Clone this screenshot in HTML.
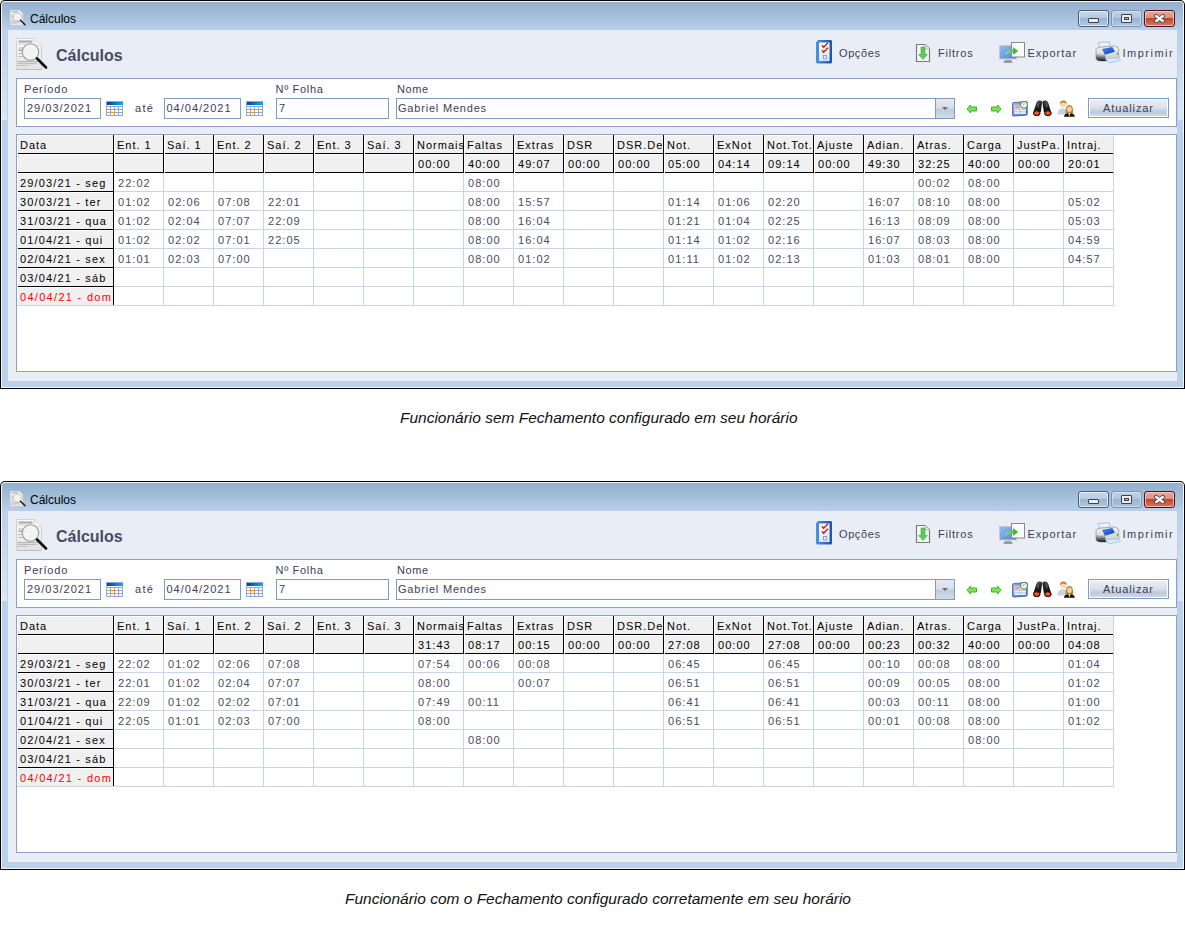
<!DOCTYPE html><html><head><meta charset="utf-8"><style>
html,body{margin:0;padding:0;background:#fff;}
body{width:1185px;height:929px;position:relative;overflow:hidden;font-family:"Liberation Sans",sans-serif;}
.win{position:absolute;left:0;width:1185px;height:389px;background:#000;border-radius:5px 5px 0 0;}
.win div,.win svg{position:absolute;}
.w-white{left:1px;top:1px;right:1px;bottom:1px;background:#f4f7fb;border-radius:4px 4px 0 0;}
.w-frame{left:2px;top:2px;right:2px;bottom:2px;background:#b9d1ea;border-radius:3px 3px 0 0;}
.w-title{left:2px;top:2px;right:2px;height:28px;background:linear-gradient(#93afcd,#b8d0e9);border-radius:3px 3px 0 0;}
.glow{top:30px;width:5px;height:90px;background:linear-gradient(#b9d1ea 0%,#c6d9ee 40%,#dae7f4 100%);}
.content{left:8px;top:30px;width:1169px;height:351px;background:#e9eef6;}
.t{position:absolute;font-size:11px;line-height:normal;white-space:nowrap;transform-origin:0 0;}
.tt{font-size:12px;color:#000;white-space:nowrap;line-height:normal;}
.big{left:56px;top:47px;font-size:16px;font-weight:bold;color:#4a4a66;white-space:nowrap;line-height:normal;}
.wb{top:10px;height:15px;border:1px solid #4d5d73;border-radius:3px;}
.wmin{left:1078px;width:29px;background:linear-gradient(#c6d8ec 0%,#b6cbe3 45%,#9ab5d3 50%,#b0c7e2 100%);box-shadow:inset 0 0 0 1px rgba(255,255,255,0.6);}
.wmax{left:1111px;width:29px;border-color:#7d92ae;background:linear-gradient(#bed2e8 0%,#b0c7e0 45%,#9ab5d3 50%,#aec5e0 100%);box-shadow:inset 0 0 0 1px rgba(255,255,255,0.4);}
.wclose{left:1144px;width:29px;border-color:#4a1020;background:linear-gradient(#eaa898 0%,#dc9080 45%,#c04428 50%,#d87a64 100%);box-shadow:inset 0 0 0 1px rgba(255,220,210,0.7);}
.gmin{left:9px;top:7px;width:9px;height:3px;background:#eee;border:1px solid #3a4050;border-radius:1px;}
.gmax{left:9px;top:3px;width:9px;height:7px;background:#eee;border:1px solid #3a4050;border-radius:1px;}
.gmax div{left:2px;top:2px;width:3px;height:1px;border:1px solid #3a4050;background:#9cc0e0;}
.panel{left:16px;top:78px;width:1159px;height:47px;background:#fff;border:1px solid #8ba1c1;}
.inp{top:98px;height:19px;background:#fff;border:1px solid #7f9dc0;}
.ddb{left:935px;top:98px;width:18px;height:19px;border:1px solid #7f9dc0;background:linear-gradient(#e4e9f2 0%,#d6dee9 48%,#bccbdc 52%,#d2dce8 100%);}
.ddarrow{left:6px;top:8px;width:0;height:0;border-left:3.5px solid transparent;border-right:3.5px solid transparent;border-top:3.5px solid #6a6a78;}
.btn{left:1088px;top:98px;width:79px;height:18px;border:1px solid #7f9dc0;background:#fff;}
.btnin{left:1px;top:1px;right:1px;bottom:1px;background:linear-gradient(#eaeef4 0%,#d8e0ea 50%,#b9c9dc 75%,#cfd9e6 100%);}
.grid{left:16px;top:134px;width:1159px;height:236px;background:#fff;border:1px solid #8da2c0;}
.gl{background:#c6d5e8;}
.hc{background:#f0f0f0;box-shadow:inset 1px 0 #fff,inset -1px 0 #000,inset 0 1px #fff,inset 0 -1px #000;}
.hc.lc{box-shadow:inset 1px 0 #fff,inset 0 1px #fff,inset 0 -1px #000;}
.hc.lr{box-shadow:inset 1px 0 #fff,inset -1px 0 #000,inset 0 1px #fff;}
.ct{font-size:11px;line-height:12px;white-space:nowrap;overflow:hidden;}
.ct{letter-spacing:1.05px;}
.hdr{letter-spacing:1.0px;}
.hdr.tot{letter-spacing:1.05px;}
.dt{letter-spacing:1.15px;}
.hdr{color:#000;}
.val{color:#4a4a60;}
.cap{position:absolute;font-size:15px;font-style:italic;color:#111;white-space:nowrap;line-height:normal;transform-origin:0 0;transform:scaleX(1.032);}
</style></head><body>
<div class="win" style="top:0px">
<div class="w-white"></div><div class="w-frame"></div><div class="w-title"></div>
<div class="content"></div><div class="glow" style="left:2px"></div><div class="glow" style="left:1178px"></div>
<svg width="16" height="16" viewBox="0 0 32 32" style="position:absolute;left:10px;top:10px"><defs><linearGradient id="dgt1" x1="0" y1="0" x2="0" y2="1"><stop offset="0" stop-color="#fbfbfb"/><stop offset="1" stop-color="#e2e2e2"/></linearGradient></defs>
<path d="M0.5 0.5 H18.5 L25.5 7.5 V31.5 H0.5 Z" fill="url(#dgt1)" stroke="#d2d2d2" stroke-width="1"/>
<path d="M0.5 31.5 H25.5" stroke="#bdbdbd" stroke-width="1"/>
<path d="M18.5 0.5 V7.5 H25.5" fill="#f4f4f4" stroke="#dadada"/>
<rect x="2.5" y="2.5" width="14" height="2" fill="#a8a8a8"/>
<rect x="1.5" y="5.5" width="14" height="0.8" fill="#c8c8c8"/>
<rect x="2.5" y="9.5" width="4" height="1" fill="#b8b8b8"/><rect x="2.5" y="11.5" width="5" height="1.5" fill="#a8a8a8"/><rect x="2.5" y="15" width="4" height="1" fill="#b8b8b8"/><rect x="2.5" y="18" width="5" height="1" fill="#b8b8b8"/>
<rect x="1.5" y="23" width="20" height="1.2" fill="#b4b4b4"/><rect x="1.5" y="25" width="19" height="1.2" fill="#bcbcbc"/><rect x="1.5" y="27" width="10" height="1" fill="#c4c4c4"/>
<circle cx="14.5" cy="14" r="8.2" fill="#f4f4f4" fill-opacity="0.92" stroke="#9c9c9c" stroke-width="1.1"/>
<path d="M21 20.5 L30 29.5" stroke="#141414" stroke-width="2.7" stroke-linecap="round"/></svg>
<div class="tt" style="left:30px;top:12px">Cálculos</div>
<div class="wb wmin"><div class="gmin"></div></div>
<div class="wb wmax"><div class="gmax"><div></div></div></div>
<div class="wb wclose"><svg width="12" height="10" viewBox="0 0 12 10" style="position:absolute;left:8.5px;top:3px"><path d="M2.2 2 L8.8 7 M8.8 2 L2.2 7" stroke="#3a4458" stroke-width="4" stroke-linecap="round"/><path d="M2.2 2 L8.8 7 M8.8 2 L2.2 7" stroke="#f8f8f8" stroke-width="2.4" stroke-linecap="round"/></svg></div>
<svg width="32" height="32" viewBox="0 0 32 32" style="position:absolute;left:16px;top:38px"><defs><linearGradient id="dgb1" x1="0" y1="0" x2="0" y2="1"><stop offset="0" stop-color="#fbfbfb"/><stop offset="1" stop-color="#e2e2e2"/></linearGradient></defs>
<path d="M0.5 0.5 H18.5 L25.5 7.5 V31.5 H0.5 Z" fill="url(#dgb1)" stroke="#d2d2d2" stroke-width="1"/>
<path d="M0.5 31.5 H25.5" stroke="#bdbdbd" stroke-width="1"/>
<path d="M18.5 0.5 V7.5 H25.5" fill="#f4f4f4" stroke="#dadada"/>
<rect x="2.5" y="2.5" width="14" height="2" fill="#a8a8a8"/>
<rect x="1.5" y="5.5" width="14" height="0.8" fill="#c8c8c8"/>
<rect x="2.5" y="9.5" width="4" height="1" fill="#b8b8b8"/><rect x="2.5" y="11.5" width="5" height="1.5" fill="#a8a8a8"/><rect x="2.5" y="15" width="4" height="1" fill="#b8b8b8"/><rect x="2.5" y="18" width="5" height="1" fill="#b8b8b8"/>
<rect x="1.5" y="23" width="20" height="1.2" fill="#b4b4b4"/><rect x="1.5" y="25" width="19" height="1.2" fill="#bcbcbc"/><rect x="1.5" y="27" width="10" height="1" fill="#c4c4c4"/>
<circle cx="14.5" cy="14" r="8.2" fill="#f4f4f4" fill-opacity="0.92" stroke="#9c9c9c" stroke-width="1.1"/>
<path d="M21 20.5 L30 29.5" stroke="#141414" stroke-width="2.7" stroke-linecap="round"/></svg>
<div class="big">Cálculos</div>
<svg width="18" height="25" viewBox="0 0 18 25" style="position:absolute;left:815px;top:39px"><defs><linearGradient id="ob1" x1="0" x2="1"><stop offset="0" stop-color="#4a92e4"/><stop offset="1" stop-color="#1a56b0"/></linearGradient>
<linearGradient id="op1" x1="0" y1="0" x2="0" y2="1"><stop offset="0" stop-color="#ffffff"/><stop offset="1" stop-color="#dde8f6"/></linearGradient></defs>
<path d="M2.2 2.2 Q2.2 1 3.6 1 H15.6 Q17 1 17 2.4 V23 Q17 24.5 15.6 24.5 H3.2 Q1 24.5 1 23 V3.2 Z" fill="url(#ob1)"/>
<rect x="4" y="3.5" width="10.5" height="18.5" fill="url(#op1)"/>
<path d="M7 6.2 L8.6 8.3 L13 3.8" stroke="#d82020" stroke-width="1.5" fill="none"/>
<path d="M7 11.2 L8.6 13.3 L13 8.8" stroke="#d82020" stroke-width="1.5" fill="none"/>
<rect x="8.5" y="16.5" width="3" height="3.5" fill="none" stroke="#6f90c8" stroke-width="0.8"/></svg>
<div class="t" style="left:839px;top:47px;color:#3d3d55;letter-spacing:0.6px">Opções</div>
<svg width="16" height="20" viewBox="0 0 16 20" style="position:absolute;left:915px;top:42.5px"><path d="M1.5 1.5 H10 L14.5 6 V18.5 H1.5 Z" fill="#f8f8f8" stroke="#7a7a7a" stroke-width="1.2"/>
<path d="M10 1.5 V6 H14.5" fill="#e6e6e6" stroke="#bbb" stroke-width="0.8"/>
<path d="M6 4 H10 V11.5 H12.3 L8 16.5 L3.7 11.5 H6 Z" fill="#5ccc5c" stroke="#3aa83a" stroke-width="0.6"/></svg>
<div class="t" style="left:938px;top:47px;color:#3d3d55;letter-spacing:0.8px">Filtros</div>
<svg width="28" height="23" viewBox="0 0 28 23" style="position:absolute;left:998px;top:41px"><defs><linearGradient id="scr1" x1="0" y1="0" x2="1" y2="1"><stop offset="0" stop-color="#8cc0f4"/><stop offset="1" stop-color="#4a86d8"/></linearGradient>
<linearGradient id="gar1" x1="0" x2="1"><stop offset="0" stop-color="#b8e080"/><stop offset="1" stop-color="#1aa82a"/></linearGradient></defs>
<rect x="1" y="4" width="18" height="14.5" fill="#c9c9c9"/>
<rect x="2" y="5" width="16" height="12.5" fill="url(#scr1)"/>
<path d="M5 22 L7 19 H13 L15 22 Z" fill="#9a9a9a"/>
<rect x="13" y="1" width="14" height="15.5" fill="#8a8a8a"/>
<rect x="14" y="2" width="12" height="13.5" fill="#fafafa"/>
<path d="M7 14 Q9 8.5 15 8.5 V6 L20 10 L15 14 V11.5 Q10 11 7 14 Z" fill="url(#gar1)"/></svg>
<div class="t" style="left:1027.5px;top:47px;color:#3d3d55;letter-spacing:1.0px">Exportar</div>
<svg width="26" height="24" viewBox="0 0 26 24" style="position:absolute;left:1095px;top:40px"><defs><linearGradient id="pb1" x1="0" y1="0" x2="0" y2="1"><stop offset="0" stop-color="#f4f4f4"/><stop offset="1" stop-color="#c8c8c8"/></linearGradient>
<linearGradient id="ps1" x1="0" y1="0" x2="0" y2="1"><stop offset="0" stop-color="#888" stop-opacity="0.1"/><stop offset="0.6" stop-color="#333" stop-opacity="0.7"/><stop offset="1" stop-color="#111" stop-opacity="0.95"/></linearGradient>
<linearGradient id="pl1" x1="0" y1="0" x2="1" y2="1"><stop offset="0" stop-color="#4a8af0"/><stop offset="1" stop-color="#0a3cc0"/></linearGradient></defs>
<path d="M3 2.5 L14.4 1.8 L15 6.7 L4.7 7.3 Z" fill="#e8f3ff" stroke="#8fb8e8" stroke-width="0.8"/>
<path d="M1 9.5 Q1.5 7.5 5 7.2 L19 6 Q23.7 6.5 23.7 9 V18 Q23.5 20.5 21 20.8 L7 21 Q1 21 1 18 Z" fill="url(#pb1)" stroke="#9a9a9a" stroke-width="0.8"/>
<path d="M1 13 Q4 14.5 10 14.5 L11 20.9 L6.5 21 Q1 21 1 17.5 Z" fill="url(#ps1)"/>
<path d="M7 9 L17.3 7 L19.9 11.8 L9.9 14.7 Z" fill="url(#pl1)"/>
<circle cx="22.4" cy="13.8" r="1" fill="#33cc33"/>
<path d="M10.5 18.6 L24 18 L25.4 20.5 L14.4 22.8 Z" fill="#dcecfc" stroke="#a0c0e0" stroke-width="0.8"/></svg>
<div class="t" style="left:1122.5px;top:47px;color:#3d3d55;letter-spacing:1.5px">Imprimir</div>
<div class="panel"></div>
<div class="t" style="left:24px;top:83px;color:#3d3d55;letter-spacing:0.8px">Período</div>
<div class="inp" style="left:24px;width:75px"></div>
<div class="t" style="left:27px;top:102px;color:#3d3d55;letter-spacing:1.0px">29/03/2021</div>
<svg width="17" height="15" viewBox="0 0 17 15" style="position:absolute;left:106px;top:101px"><defs><linearGradient id="cg1a" x1="0" x2="1"><stop offset="0" stop-color="#0a3a98"/><stop offset="1" stop-color="#00b4f0"/></linearGradient></defs><rect x="0" y="0" width="17" height="15" fill="#8fa9d6"/><rect x="1" y="1" width="16" height="3" fill="url(#cg1a)"/><rect x="1" y="4" width="15" height="1" fill="#fff"/><rect x="1" y="6" width="3" height="2" fill="#fff"/><rect x="1" y="9" width="3" height="2" fill="#fff"/><rect x="1" y="12" width="3" height="2" fill="#fff"/><rect x="5" y="6" width="3" height="2" fill="#fff"/><rect x="5" y="9" width="3" height="2" fill="#fff"/><rect x="5" y="12" width="3" height="2" fill="#fff"/><rect x="9" y="6" width="3" height="2" fill="#fff"/><rect x="9" y="9" width="3" height="2" fill="#fff"/><rect x="9" y="12" width="3" height="2" fill="#fff"/><rect x="13" y="6" width="3" height="2" fill="#fff"/><rect x="13" y="9" width="3" height="2" fill="#fff"/><rect x="13" y="12" width="3" height="2" fill="#fff"/><rect x="4.5" y="8.5" width="4" height="3" fill="none" stroke="#f7941d" stroke-width="1"/></svg>
<div class="t" style="left:135px;top:102px;color:#3d3d55;letter-spacing:1.3px">até</div>
<div class="inp" style="left:164px;width:75px"></div>
<div class="t" style="left:166.5px;top:102px;color:#3d3d55;letter-spacing:1.0px">04/04/2021</div>
<svg width="17" height="15" viewBox="0 0 17 15" style="position:absolute;left:246px;top:101px"><defs><linearGradient id="cg1b" x1="0" x2="1"><stop offset="0" stop-color="#0a3a98"/><stop offset="1" stop-color="#00b4f0"/></linearGradient></defs><rect x="0" y="0" width="17" height="15" fill="#8fa9d6"/><rect x="1" y="1" width="16" height="3" fill="url(#cg1b)"/><rect x="1" y="4" width="15" height="1" fill="#fff"/><rect x="1" y="6" width="3" height="2" fill="#fff"/><rect x="1" y="9" width="3" height="2" fill="#fff"/><rect x="1" y="12" width="3" height="2" fill="#fff"/><rect x="5" y="6" width="3" height="2" fill="#fff"/><rect x="5" y="9" width="3" height="2" fill="#fff"/><rect x="5" y="12" width="3" height="2" fill="#fff"/><rect x="9" y="6" width="3" height="2" fill="#fff"/><rect x="9" y="9" width="3" height="2" fill="#fff"/><rect x="9" y="12" width="3" height="2" fill="#fff"/><rect x="13" y="6" width="3" height="2" fill="#fff"/><rect x="13" y="9" width="3" height="2" fill="#fff"/><rect x="13" y="12" width="3" height="2" fill="#fff"/><rect x="4.5" y="8.5" width="4" height="3" fill="none" stroke="#f7941d" stroke-width="1"/></svg>
<div class="t" style="left:275.5px;top:83px;color:#3d3d55;letter-spacing:0.7px">Nº Folha</div>
<div class="inp" style="left:276px;width:111px"></div>
<div class="t" style="left:279px;top:102px;color:#3d3d55;">7</div>
<div class="t" style="left:397px;top:83px;color:#3d3d55;letter-spacing:0.6px">Nome</div>
<div class="inp" style="left:396px;width:557px"></div>
<div class="ddb"><div class="ddarrow"></div></div>
<div class="t" style="left:398px;top:102px;color:#3d3d55;letter-spacing:0.8px">Gabriel Mendes</div>
<svg width="12" height="10" viewBox="0 0 12 10" style="position:absolute;left:966px;top:104px"><path d="M1 5 L4.5 1 V3 H10.5 V7 H4.5 V9 Z" fill="#7fe060" stroke="#3cb814" stroke-width="1" stroke-linejoin="round"/></svg><svg width="12" height="10" viewBox="0 0 12 10" style="position:absolute;left:990px;top:104px"><path d="M11 5 L7.5 1 V3 H1.5 V7 H7.5 V9 Z" fill="#7fe060" stroke="#3cb814" stroke-width="1" stroke-linejoin="round"/></svg>
<svg width="17" height="16" viewBox="0 0 17 16" style="position:absolute;left:1012px;top:101px"><defs><linearGradient id="cc1" x1="0" y1="0" x2="1" y2="1"><stop offset="0" stop-color="#8fb0e6"/><stop offset="1" stop-color="#4a72bc"/></linearGradient></defs>
<path d="M1.5 1.5 Q0.5 1.5 0.5 2.8 V14 Q0.5 15.2 1.8 15.1 L14 14.2 Q15.3 14 15.3 12.8 V1.8 Q15.3 0.6 14 0.6 Z" fill="url(#cc1)" stroke="#3f62a8" stroke-width="0.8"/>
<rect x="2.3" y="3.8" width="11.5" height="9.2" fill="#f0f4fc"/>
<rect x="3" y="4.3" width="5" height="3.2" fill="#d9a58c"/>
<path d="M2.3 8.3 H13.8 M2.3 10.8 H13.8 M7.8 8 V13" stroke="#aac0e4" stroke-width="0.9"/>
<circle cx="12" cy="3.8" r="3.5" fill="#f2fcef" stroke="#4e7e4e" stroke-width="1"/>
<path d="M12.2 1.8 L11.6 4.4" stroke="#777" stroke-width="0.7" fill="none"/></svg>
<svg width="20" height="17" viewBox="0 0 20 17" style="position:absolute;left:1033px;top:100px"><defs><radialGradient id="ln1" cx="0.5" cy="0.4" r="0.6"><stop offset="0" stop-color="#ff7040"/><stop offset="1" stop-color="#c41a00"/></radialGradient>
<linearGradient id="bb1" x1="0" y1="0" x2="0" y2="1"><stop offset="0" stop-color="#3a3a3a"/><stop offset="0.5" stop-color="#202020"/><stop offset="1" stop-color="#111"/></linearGradient></defs>
<path d="M0.3 12.5 L3.4 2.8 Q4.6 0.5 6.3 0.6 Q8.6 0.7 9.3 1.8 L7.8 12 Z" fill="url(#bb1)"/>
<path d="M18.3 12.5 L15.2 2.8 Q14 0.5 12.3 0.6 Q10 0.7 9.3 1.8 L10.8 12 Z" fill="url(#bb1)"/>
<path d="M3.4 6 L4.6 2.2 Q5.5 1.2 6.4 1.5 L5.6 8 Z" fill="#8a8a8a" opacity="0.45"/>
<path d="M12.2 1.5 Q13.1 1.2 14 2.2 L15.2 6 L13 8 Z" fill="#8a8a8a" opacity="0.45"/>
<ellipse cx="3.7" cy="13.2" rx="3.4" ry="2.5" fill="url(#ln1)" stroke="#151515" stroke-width="1"/>
<ellipse cx="14.9" cy="13.2" rx="3.4" ry="2.5" fill="url(#ln1)" stroke="#151515" stroke-width="1"/></svg>
<svg width="19" height="18" viewBox="0 0 19 18" style="position:absolute;left:1057px;top:100px"><path d="M0.2 14.5 Q0.5 8.6 5.8 8.2 Q8.8 8.3 9 10 V14.5 Z" fill="#cbcfe6"/>
<circle cx="6.3" cy="4.2" r="3.2" fill="#f8d8b0"/>
<path d="M3 4.2 Q3 0.4 6.5 0.5 Q9.8 0.7 9.6 4 Q8.4 2.3 6 2.4 Q4.2 2.6 3 4.2 Z" fill="#b8862a"/>
<path d="M8.7 13.2 Q8.2 5 12.4 5 Q16.6 5 16.2 13.2 Z" fill="#b8862a"/>
<ellipse cx="12.4" cy="9.2" rx="2.3" ry="2.7" fill="#f6d0a8"/>
<path d="M6.9 16.8 Q7.2 13.3 12.4 13 Q17.5 13.3 17.9 16.8 Z" fill="#111"/>
<path d="M11.2 13 L12.4 16.8 L13.6 13 Z" fill="#f6d0a8"/></svg>
<div class="btn"><div class="btnin"></div></div>
<div class="t" style="left:1103px;top:102px;color:#3d3d55;letter-spacing:0.9px">Atualizar</div>
<div class="grid"></div>
<div class="gl" style="left:114px;top:191px;width:999px;height:1px"></div>
<div class="gl" style="left:114px;top:210px;width:999px;height:1px"></div>
<div class="gl" style="left:114px;top:229px;width:999px;height:1px"></div>
<div class="gl" style="left:114px;top:248px;width:999px;height:1px"></div>
<div class="gl" style="left:114px;top:267px;width:999px;height:1px"></div>
<div class="gl" style="left:114px;top:286px;width:999px;height:1px"></div>
<div class="gl" style="left:114px;top:305px;width:999px;height:1px"></div>
<div class="gl" style="left:17px;top:305px;width:1096px;height:1px"></div>
<div class="gl" style="left:163px;top:135px;width:1px;height:171px"></div>
<div class="gl" style="left:213px;top:135px;width:1px;height:171px"></div>
<div class="gl" style="left:263px;top:135px;width:1px;height:171px"></div>
<div class="gl" style="left:313px;top:135px;width:1px;height:171px"></div>
<div class="gl" style="left:363px;top:135px;width:1px;height:171px"></div>
<div class="gl" style="left:413px;top:135px;width:1px;height:171px"></div>
<div class="gl" style="left:463px;top:135px;width:1px;height:171px"></div>
<div class="gl" style="left:513px;top:135px;width:1px;height:171px"></div>
<div class="gl" style="left:563px;top:135px;width:1px;height:171px"></div>
<div class="gl" style="left:613px;top:135px;width:1px;height:171px"></div>
<div class="gl" style="left:663px;top:135px;width:1px;height:171px"></div>
<div class="gl" style="left:713px;top:135px;width:1px;height:171px"></div>
<div class="gl" style="left:763px;top:135px;width:1px;height:171px"></div>
<div class="gl" style="left:813px;top:135px;width:1px;height:171px"></div>
<div class="gl" style="left:863px;top:135px;width:1px;height:171px"></div>
<div class="gl" style="left:913px;top:135px;width:1px;height:171px"></div>
<div class="gl" style="left:963px;top:135px;width:1px;height:171px"></div>
<div class="gl" style="left:1013px;top:135px;width:1px;height:171px"></div>
<div class="gl" style="left:1063px;top:135px;width:1px;height:171px"></div>
<div class="gl" style="left:1113px;top:135px;width:1px;height:171px"></div>
<div class="hc" style="left:17px;top:135px;width:97px;height:19px"></div>
<div class="hc" style="left:114px;top:135px;width:50px;height:19px"></div>
<div class="hc" style="left:164px;top:135px;width:50px;height:19px"></div>
<div class="hc" style="left:214px;top:135px;width:50px;height:19px"></div>
<div class="hc" style="left:264px;top:135px;width:50px;height:19px"></div>
<div class="hc" style="left:314px;top:135px;width:50px;height:19px"></div>
<div class="hc" style="left:364px;top:135px;width:50px;height:19px"></div>
<div class="hc" style="left:414px;top:135px;width:50px;height:19px"></div>
<div class="hc" style="left:464px;top:135px;width:50px;height:19px"></div>
<div class="hc" style="left:514px;top:135px;width:50px;height:19px"></div>
<div class="hc" style="left:564px;top:135px;width:50px;height:19px"></div>
<div class="hc" style="left:614px;top:135px;width:50px;height:19px"></div>
<div class="hc" style="left:664px;top:135px;width:50px;height:19px"></div>
<div class="hc" style="left:714px;top:135px;width:50px;height:19px"></div>
<div class="hc" style="left:764px;top:135px;width:50px;height:19px"></div>
<div class="hc" style="left:814px;top:135px;width:50px;height:19px"></div>
<div class="hc" style="left:864px;top:135px;width:50px;height:19px"></div>
<div class="hc" style="left:914px;top:135px;width:50px;height:19px"></div>
<div class="hc" style="left:964px;top:135px;width:50px;height:19px"></div>
<div class="hc" style="left:1014px;top:135px;width:50px;height:19px"></div>
<div class="hc lc" style="left:1064px;top:135px;width:49px;height:19px"></div>
<div class="hc" style="left:17px;top:154px;width:97px;height:19px"></div>
<div class="hc" style="left:114px;top:154px;width:50px;height:19px"></div>
<div class="hc" style="left:164px;top:154px;width:50px;height:19px"></div>
<div class="hc" style="left:214px;top:154px;width:50px;height:19px"></div>
<div class="hc" style="left:264px;top:154px;width:50px;height:19px"></div>
<div class="hc" style="left:314px;top:154px;width:50px;height:19px"></div>
<div class="hc" style="left:364px;top:154px;width:50px;height:19px"></div>
<div class="hc" style="left:414px;top:154px;width:50px;height:19px"></div>
<div class="hc" style="left:464px;top:154px;width:50px;height:19px"></div>
<div class="hc" style="left:514px;top:154px;width:50px;height:19px"></div>
<div class="hc" style="left:564px;top:154px;width:50px;height:19px"></div>
<div class="hc" style="left:614px;top:154px;width:50px;height:19px"></div>
<div class="hc" style="left:664px;top:154px;width:50px;height:19px"></div>
<div class="hc" style="left:714px;top:154px;width:50px;height:19px"></div>
<div class="hc" style="left:764px;top:154px;width:50px;height:19px"></div>
<div class="hc" style="left:814px;top:154px;width:50px;height:19px"></div>
<div class="hc" style="left:864px;top:154px;width:50px;height:19px"></div>
<div class="hc" style="left:914px;top:154px;width:50px;height:19px"></div>
<div class="hc" style="left:964px;top:154px;width:50px;height:19px"></div>
<div class="hc" style="left:1014px;top:154px;width:50px;height:19px"></div>
<div class="hc lc" style="left:1064px;top:154px;width:49px;height:19px"></div>
<div class="hc" style="left:17px;top:173px;width:97px;height:19px"></div>
<div class="hc" style="left:17px;top:192px;width:97px;height:19px"></div>
<div class="hc" style="left:17px;top:211px;width:97px;height:19px"></div>
<div class="hc" style="left:17px;top:230px;width:97px;height:19px"></div>
<div class="hc" style="left:17px;top:249px;width:97px;height:19px"></div>
<div class="hc" style="left:17px;top:268px;width:97px;height:19px"></div>
<div class="hc lr" style="left:17px;top:287px;width:97px;height:18px"></div>
<div class="ct hdr" style="left:20px;top:139px;width:93px"><span>Data</span></div>
<div class="ct hdr" style="left:117px;top:139px;width:46px"><span>Ent. 1</span></div>
<div class="ct hdr" style="left:167px;top:139px;width:46px"><span>Saí. 1</span></div>
<div class="ct hdr" style="left:217px;top:139px;width:46px"><span>Ent. 2</span></div>
<div class="ct hdr" style="left:267px;top:139px;width:46px"><span>Saí. 2</span></div>
<div class="ct hdr" style="left:317px;top:139px;width:46px"><span>Ent. 3</span></div>
<div class="ct hdr" style="left:367px;top:139px;width:46px"><span>Saí. 3</span></div>
<div class="ct hdr" style="left:417px;top:139px;width:46px"><span>Normais</span></div>
<div class="ct hdr" style="left:467px;top:139px;width:46px"><span>Faltas</span></div>
<div class="ct hdr" style="left:517px;top:139px;width:46px"><span>Extras</span></div>
<div class="ct hdr" style="left:567px;top:139px;width:46px"><span>DSR</span></div>
<div class="ct hdr" style="left:617px;top:139px;width:46px"><span>DSR.De</span></div>
<div class="ct hdr" style="left:667px;top:139px;width:46px"><span>Not.</span></div>
<div class="ct hdr" style="left:717px;top:139px;width:46px"><span>ExNot</span></div>
<div class="ct hdr" style="left:767px;top:139px;width:46px"><span>Not.Tot.</span></div>
<div class="ct hdr" style="left:817px;top:139px;width:46px"><span>Ajuste</span></div>
<div class="ct hdr" style="left:867px;top:139px;width:46px"><span>Adian.</span></div>
<div class="ct hdr" style="left:917px;top:139px;width:46px"><span>Atras.</span></div>
<div class="ct hdr" style="left:967px;top:139px;width:46px"><span>Carga</span></div>
<div class="ct hdr" style="left:1017px;top:139px;width:46px"><span>JustPa.</span></div>
<div class="ct hdr" style="left:1067px;top:139px;width:46px"><span>Intraj.</span></div>
<div class="ct hdr tot" style="left:418px;top:158px;width:46px"><span>00:00</span></div>
<div class="ct hdr tot" style="left:468px;top:158px;width:46px"><span>40:00</span></div>
<div class="ct hdr tot" style="left:518px;top:158px;width:46px"><span>49:07</span></div>
<div class="ct hdr tot" style="left:568px;top:158px;width:46px"><span>00:00</span></div>
<div class="ct hdr tot" style="left:618px;top:158px;width:46px"><span>00:00</span></div>
<div class="ct hdr tot" style="left:668px;top:158px;width:46px"><span>05:00</span></div>
<div class="ct hdr tot" style="left:718px;top:158px;width:46px"><span>04:14</span></div>
<div class="ct hdr tot" style="left:768px;top:158px;width:46px"><span>09:14</span></div>
<div class="ct hdr tot" style="left:818px;top:158px;width:46px"><span>00:00</span></div>
<div class="ct hdr tot" style="left:868px;top:158px;width:46px"><span>49:30</span></div>
<div class="ct hdr tot" style="left:918px;top:158px;width:46px"><span>32:25</span></div>
<div class="ct hdr tot" style="left:968px;top:158px;width:46px"><span>40:00</span></div>
<div class="ct hdr tot" style="left:1018px;top:158px;width:46px"><span>00:00</span></div>
<div class="ct hdr tot" style="left:1068px;top:158px;width:46px"><span>20:01</span></div>
<div class="ct dt" style="left:20px;top:177px;width:93px;color:#000;"><span>29/03/21 - seg</span></div>
<div class="ct val" style="left:118px;top:177px;width:45px"><span>22:02</span></div>
<div class="ct val" style="left:468px;top:177px;width:45px"><span>08:00</span></div>
<div class="ct val" style="left:918px;top:177px;width:45px"><span>00:02</span></div>
<div class="ct val" style="left:968px;top:177px;width:45px"><span>08:00</span></div>
<div class="ct dt" style="left:20px;top:196px;width:93px;color:#000;"><span>30/03/21 - ter</span></div>
<div class="ct val" style="left:118px;top:196px;width:45px"><span>01:02</span></div>
<div class="ct val" style="left:168px;top:196px;width:45px"><span>02:06</span></div>
<div class="ct val" style="left:218px;top:196px;width:45px"><span>07:08</span></div>
<div class="ct val" style="left:268px;top:196px;width:45px"><span>22:01</span></div>
<div class="ct val" style="left:468px;top:196px;width:45px"><span>08:00</span></div>
<div class="ct val" style="left:518px;top:196px;width:45px"><span>15:57</span></div>
<div class="ct val" style="left:668px;top:196px;width:45px"><span>01:14</span></div>
<div class="ct val" style="left:718px;top:196px;width:45px"><span>01:06</span></div>
<div class="ct val" style="left:768px;top:196px;width:45px"><span>02:20</span></div>
<div class="ct val" style="left:868px;top:196px;width:45px"><span>16:07</span></div>
<div class="ct val" style="left:918px;top:196px;width:45px"><span>08:10</span></div>
<div class="ct val" style="left:968px;top:196px;width:45px"><span>08:00</span></div>
<div class="ct val" style="left:1068px;top:196px;width:45px"><span>05:02</span></div>
<div class="ct dt" style="left:20px;top:215px;width:93px;color:#000;"><span>31/03/21 - qua</span></div>
<div class="ct val" style="left:118px;top:215px;width:45px"><span>01:02</span></div>
<div class="ct val" style="left:168px;top:215px;width:45px"><span>02:04</span></div>
<div class="ct val" style="left:218px;top:215px;width:45px"><span>07:07</span></div>
<div class="ct val" style="left:268px;top:215px;width:45px"><span>22:09</span></div>
<div class="ct val" style="left:468px;top:215px;width:45px"><span>08:00</span></div>
<div class="ct val" style="left:518px;top:215px;width:45px"><span>16:04</span></div>
<div class="ct val" style="left:668px;top:215px;width:45px"><span>01:21</span></div>
<div class="ct val" style="left:718px;top:215px;width:45px"><span>01:04</span></div>
<div class="ct val" style="left:768px;top:215px;width:45px"><span>02:25</span></div>
<div class="ct val" style="left:868px;top:215px;width:45px"><span>16:13</span></div>
<div class="ct val" style="left:918px;top:215px;width:45px"><span>08:09</span></div>
<div class="ct val" style="left:968px;top:215px;width:45px"><span>08:00</span></div>
<div class="ct val" style="left:1068px;top:215px;width:45px"><span>05:03</span></div>
<div class="ct dt" style="left:20px;top:234px;width:93px;color:#000;"><span>01/04/21 - qui</span></div>
<div class="ct val" style="left:118px;top:234px;width:45px"><span>01:02</span></div>
<div class="ct val" style="left:168px;top:234px;width:45px"><span>02:02</span></div>
<div class="ct val" style="left:218px;top:234px;width:45px"><span>07:01</span></div>
<div class="ct val" style="left:268px;top:234px;width:45px"><span>22:05</span></div>
<div class="ct val" style="left:468px;top:234px;width:45px"><span>08:00</span></div>
<div class="ct val" style="left:518px;top:234px;width:45px"><span>16:04</span></div>
<div class="ct val" style="left:668px;top:234px;width:45px"><span>01:14</span></div>
<div class="ct val" style="left:718px;top:234px;width:45px"><span>01:02</span></div>
<div class="ct val" style="left:768px;top:234px;width:45px"><span>02:16</span></div>
<div class="ct val" style="left:868px;top:234px;width:45px"><span>16:07</span></div>
<div class="ct val" style="left:918px;top:234px;width:45px"><span>08:03</span></div>
<div class="ct val" style="left:968px;top:234px;width:45px"><span>08:00</span></div>
<div class="ct val" style="left:1068px;top:234px;width:45px"><span>04:59</span></div>
<div class="ct dt" style="left:20px;top:253px;width:93px;color:#000;"><span>02/04/21 - sex</span></div>
<div class="ct val" style="left:118px;top:253px;width:45px"><span>01:01</span></div>
<div class="ct val" style="left:168px;top:253px;width:45px"><span>02:03</span></div>
<div class="ct val" style="left:218px;top:253px;width:45px"><span>07:00</span></div>
<div class="ct val" style="left:468px;top:253px;width:45px"><span>08:00</span></div>
<div class="ct val" style="left:518px;top:253px;width:45px"><span>01:02</span></div>
<div class="ct val" style="left:668px;top:253px;width:45px"><span>01:11</span></div>
<div class="ct val" style="left:718px;top:253px;width:45px"><span>01:02</span></div>
<div class="ct val" style="left:768px;top:253px;width:45px"><span>02:13</span></div>
<div class="ct val" style="left:868px;top:253px;width:45px"><span>01:03</span></div>
<div class="ct val" style="left:918px;top:253px;width:45px"><span>08:01</span></div>
<div class="ct val" style="left:968px;top:253px;width:45px"><span>08:00</span></div>
<div class="ct val" style="left:1068px;top:253px;width:45px"><span>04:57</span></div>
<div class="ct dt" style="left:20px;top:272px;width:93px;color:#000;"><span>03/04/21 - sáb</span></div>
<div class="ct dt" style="left:20px;top:291px;width:93px;color:#ff0000;letter-spacing:1.3px"><span>04/04/21 - dom</span></div>
</div>
<div class="cap" style="left:400px;top:409px">Funcionário sem Fechamento configurado em seu horário</div><div class="win" style="top:481px">
<div class="w-white"></div><div class="w-frame"></div><div class="w-title"></div>
<div class="content"></div><div class="glow" style="left:2px"></div><div class="glow" style="left:1178px"></div>
<svg width="16" height="16" viewBox="0 0 32 32" style="position:absolute;left:10px;top:10px"><defs><linearGradient id="dgt2" x1="0" y1="0" x2="0" y2="1"><stop offset="0" stop-color="#fbfbfb"/><stop offset="1" stop-color="#e2e2e2"/></linearGradient></defs>
<path d="M0.5 0.5 H18.5 L25.5 7.5 V31.5 H0.5 Z" fill="url(#dgt2)" stroke="#d2d2d2" stroke-width="1"/>
<path d="M0.5 31.5 H25.5" stroke="#bdbdbd" stroke-width="1"/>
<path d="M18.5 0.5 V7.5 H25.5" fill="#f4f4f4" stroke="#dadada"/>
<rect x="2.5" y="2.5" width="14" height="2" fill="#a8a8a8"/>
<rect x="1.5" y="5.5" width="14" height="0.8" fill="#c8c8c8"/>
<rect x="2.5" y="9.5" width="4" height="1" fill="#b8b8b8"/><rect x="2.5" y="11.5" width="5" height="1.5" fill="#a8a8a8"/><rect x="2.5" y="15" width="4" height="1" fill="#b8b8b8"/><rect x="2.5" y="18" width="5" height="1" fill="#b8b8b8"/>
<rect x="1.5" y="23" width="20" height="1.2" fill="#b4b4b4"/><rect x="1.5" y="25" width="19" height="1.2" fill="#bcbcbc"/><rect x="1.5" y="27" width="10" height="1" fill="#c4c4c4"/>
<circle cx="14.5" cy="14" r="8.2" fill="#f4f4f4" fill-opacity="0.92" stroke="#9c9c9c" stroke-width="1.1"/>
<path d="M21 20.5 L30 29.5" stroke="#141414" stroke-width="2.7" stroke-linecap="round"/></svg>
<div class="tt" style="left:30px;top:12px">Cálculos</div>
<div class="wb wmin"><div class="gmin"></div></div>
<div class="wb wmax"><div class="gmax"><div></div></div></div>
<div class="wb wclose"><svg width="12" height="10" viewBox="0 0 12 10" style="position:absolute;left:8.5px;top:3px"><path d="M2.2 2 L8.8 7 M8.8 2 L2.2 7" stroke="#3a4458" stroke-width="4" stroke-linecap="round"/><path d="M2.2 2 L8.8 7 M8.8 2 L2.2 7" stroke="#f8f8f8" stroke-width="2.4" stroke-linecap="round"/></svg></div>
<svg width="32" height="32" viewBox="0 0 32 32" style="position:absolute;left:16px;top:38px"><defs><linearGradient id="dgb2" x1="0" y1="0" x2="0" y2="1"><stop offset="0" stop-color="#fbfbfb"/><stop offset="1" stop-color="#e2e2e2"/></linearGradient></defs>
<path d="M0.5 0.5 H18.5 L25.5 7.5 V31.5 H0.5 Z" fill="url(#dgb2)" stroke="#d2d2d2" stroke-width="1"/>
<path d="M0.5 31.5 H25.5" stroke="#bdbdbd" stroke-width="1"/>
<path d="M18.5 0.5 V7.5 H25.5" fill="#f4f4f4" stroke="#dadada"/>
<rect x="2.5" y="2.5" width="14" height="2" fill="#a8a8a8"/>
<rect x="1.5" y="5.5" width="14" height="0.8" fill="#c8c8c8"/>
<rect x="2.5" y="9.5" width="4" height="1" fill="#b8b8b8"/><rect x="2.5" y="11.5" width="5" height="1.5" fill="#a8a8a8"/><rect x="2.5" y="15" width="4" height="1" fill="#b8b8b8"/><rect x="2.5" y="18" width="5" height="1" fill="#b8b8b8"/>
<rect x="1.5" y="23" width="20" height="1.2" fill="#b4b4b4"/><rect x="1.5" y="25" width="19" height="1.2" fill="#bcbcbc"/><rect x="1.5" y="27" width="10" height="1" fill="#c4c4c4"/>
<circle cx="14.5" cy="14" r="8.2" fill="#f4f4f4" fill-opacity="0.92" stroke="#9c9c9c" stroke-width="1.1"/>
<path d="M21 20.5 L30 29.5" stroke="#141414" stroke-width="2.7" stroke-linecap="round"/></svg>
<div class="big">Cálculos</div>
<svg width="18" height="25" viewBox="0 0 18 25" style="position:absolute;left:815px;top:39px"><defs><linearGradient id="ob2" x1="0" x2="1"><stop offset="0" stop-color="#4a92e4"/><stop offset="1" stop-color="#1a56b0"/></linearGradient>
<linearGradient id="op2" x1="0" y1="0" x2="0" y2="1"><stop offset="0" stop-color="#ffffff"/><stop offset="1" stop-color="#dde8f6"/></linearGradient></defs>
<path d="M2.2 2.2 Q2.2 1 3.6 1 H15.6 Q17 1 17 2.4 V23 Q17 24.5 15.6 24.5 H3.2 Q1 24.5 1 23 V3.2 Z" fill="url(#ob2)"/>
<rect x="4" y="3.5" width="10.5" height="18.5" fill="url(#op2)"/>
<path d="M7 6.2 L8.6 8.3 L13 3.8" stroke="#d82020" stroke-width="1.5" fill="none"/>
<path d="M7 11.2 L8.6 13.3 L13 8.8" stroke="#d82020" stroke-width="1.5" fill="none"/>
<rect x="8.5" y="16.5" width="3" height="3.5" fill="none" stroke="#6f90c8" stroke-width="0.8"/></svg>
<div class="t" style="left:839px;top:47px;color:#3d3d55;letter-spacing:0.6px">Opções</div>
<svg width="16" height="20" viewBox="0 0 16 20" style="position:absolute;left:915px;top:42.5px"><path d="M1.5 1.5 H10 L14.5 6 V18.5 H1.5 Z" fill="#f8f8f8" stroke="#7a7a7a" stroke-width="1.2"/>
<path d="M10 1.5 V6 H14.5" fill="#e6e6e6" stroke="#bbb" stroke-width="0.8"/>
<path d="M6 4 H10 V11.5 H12.3 L8 16.5 L3.7 11.5 H6 Z" fill="#5ccc5c" stroke="#3aa83a" stroke-width="0.6"/></svg>
<div class="t" style="left:938px;top:47px;color:#3d3d55;letter-spacing:0.8px">Filtros</div>
<svg width="28" height="23" viewBox="0 0 28 23" style="position:absolute;left:998px;top:41px"><defs><linearGradient id="scr2" x1="0" y1="0" x2="1" y2="1"><stop offset="0" stop-color="#8cc0f4"/><stop offset="1" stop-color="#4a86d8"/></linearGradient>
<linearGradient id="gar2" x1="0" x2="1"><stop offset="0" stop-color="#b8e080"/><stop offset="1" stop-color="#1aa82a"/></linearGradient></defs>
<rect x="1" y="4" width="18" height="14.5" fill="#c9c9c9"/>
<rect x="2" y="5" width="16" height="12.5" fill="url(#scr2)"/>
<path d="M5 22 L7 19 H13 L15 22 Z" fill="#9a9a9a"/>
<rect x="13" y="1" width="14" height="15.5" fill="#8a8a8a"/>
<rect x="14" y="2" width="12" height="13.5" fill="#fafafa"/>
<path d="M7 14 Q9 8.5 15 8.5 V6 L20 10 L15 14 V11.5 Q10 11 7 14 Z" fill="url(#gar2)"/></svg>
<div class="t" style="left:1027.5px;top:47px;color:#3d3d55;letter-spacing:1.0px">Exportar</div>
<svg width="26" height="24" viewBox="0 0 26 24" style="position:absolute;left:1095px;top:40px"><defs><linearGradient id="pb2" x1="0" y1="0" x2="0" y2="1"><stop offset="0" stop-color="#f4f4f4"/><stop offset="1" stop-color="#c8c8c8"/></linearGradient>
<linearGradient id="ps2" x1="0" y1="0" x2="0" y2="1"><stop offset="0" stop-color="#888" stop-opacity="0.1"/><stop offset="0.6" stop-color="#333" stop-opacity="0.7"/><stop offset="1" stop-color="#111" stop-opacity="0.95"/></linearGradient>
<linearGradient id="pl2" x1="0" y1="0" x2="1" y2="1"><stop offset="0" stop-color="#4a8af0"/><stop offset="1" stop-color="#0a3cc0"/></linearGradient></defs>
<path d="M3 2.5 L14.4 1.8 L15 6.7 L4.7 7.3 Z" fill="#e8f3ff" stroke="#8fb8e8" stroke-width="0.8"/>
<path d="M1 9.5 Q1.5 7.5 5 7.2 L19 6 Q23.7 6.5 23.7 9 V18 Q23.5 20.5 21 20.8 L7 21 Q1 21 1 18 Z" fill="url(#pb2)" stroke="#9a9a9a" stroke-width="0.8"/>
<path d="M1 13 Q4 14.5 10 14.5 L11 20.9 L6.5 21 Q1 21 1 17.5 Z" fill="url(#ps2)"/>
<path d="M7 9 L17.3 7 L19.9 11.8 L9.9 14.7 Z" fill="url(#pl2)"/>
<circle cx="22.4" cy="13.8" r="1" fill="#33cc33"/>
<path d="M10.5 18.6 L24 18 L25.4 20.5 L14.4 22.8 Z" fill="#dcecfc" stroke="#a0c0e0" stroke-width="0.8"/></svg>
<div class="t" style="left:1122.5px;top:47px;color:#3d3d55;letter-spacing:1.5px">Imprimir</div>
<div class="panel"></div>
<div class="t" style="left:24px;top:83px;color:#3d3d55;letter-spacing:0.8px">Período</div>
<div class="inp" style="left:24px;width:75px"></div>
<div class="t" style="left:27px;top:102px;color:#3d3d55;letter-spacing:1.0px">29/03/2021</div>
<svg width="17" height="15" viewBox="0 0 17 15" style="position:absolute;left:106px;top:101px"><defs><linearGradient id="cg2a" x1="0" x2="1"><stop offset="0" stop-color="#0a3a98"/><stop offset="1" stop-color="#00b4f0"/></linearGradient></defs><rect x="0" y="0" width="17" height="15" fill="#8fa9d6"/><rect x="1" y="1" width="16" height="3" fill="url(#cg2a)"/><rect x="1" y="4" width="15" height="1" fill="#fff"/><rect x="1" y="6" width="3" height="2" fill="#fff"/><rect x="1" y="9" width="3" height="2" fill="#fff"/><rect x="1" y="12" width="3" height="2" fill="#fff"/><rect x="5" y="6" width="3" height="2" fill="#fff"/><rect x="5" y="9" width="3" height="2" fill="#fff"/><rect x="5" y="12" width="3" height="2" fill="#fff"/><rect x="9" y="6" width="3" height="2" fill="#fff"/><rect x="9" y="9" width="3" height="2" fill="#fff"/><rect x="9" y="12" width="3" height="2" fill="#fff"/><rect x="13" y="6" width="3" height="2" fill="#fff"/><rect x="13" y="9" width="3" height="2" fill="#fff"/><rect x="13" y="12" width="3" height="2" fill="#fff"/><rect x="4.5" y="8.5" width="4" height="3" fill="none" stroke="#f7941d" stroke-width="1"/></svg>
<div class="t" style="left:135px;top:102px;color:#3d3d55;letter-spacing:1.3px">até</div>
<div class="inp" style="left:164px;width:75px"></div>
<div class="t" style="left:166.5px;top:102px;color:#3d3d55;letter-spacing:1.0px">04/04/2021</div>
<svg width="17" height="15" viewBox="0 0 17 15" style="position:absolute;left:246px;top:101px"><defs><linearGradient id="cg2b" x1="0" x2="1"><stop offset="0" stop-color="#0a3a98"/><stop offset="1" stop-color="#00b4f0"/></linearGradient></defs><rect x="0" y="0" width="17" height="15" fill="#8fa9d6"/><rect x="1" y="1" width="16" height="3" fill="url(#cg2b)"/><rect x="1" y="4" width="15" height="1" fill="#fff"/><rect x="1" y="6" width="3" height="2" fill="#fff"/><rect x="1" y="9" width="3" height="2" fill="#fff"/><rect x="1" y="12" width="3" height="2" fill="#fff"/><rect x="5" y="6" width="3" height="2" fill="#fff"/><rect x="5" y="9" width="3" height="2" fill="#fff"/><rect x="5" y="12" width="3" height="2" fill="#fff"/><rect x="9" y="6" width="3" height="2" fill="#fff"/><rect x="9" y="9" width="3" height="2" fill="#fff"/><rect x="9" y="12" width="3" height="2" fill="#fff"/><rect x="13" y="6" width="3" height="2" fill="#fff"/><rect x="13" y="9" width="3" height="2" fill="#fff"/><rect x="13" y="12" width="3" height="2" fill="#fff"/><rect x="4.5" y="8.5" width="4" height="3" fill="none" stroke="#f7941d" stroke-width="1"/></svg>
<div class="t" style="left:275.5px;top:83px;color:#3d3d55;letter-spacing:0.7px">Nº Folha</div>
<div class="inp" style="left:276px;width:111px"></div>
<div class="t" style="left:279px;top:102px;color:#3d3d55;">7</div>
<div class="t" style="left:397px;top:83px;color:#3d3d55;letter-spacing:0.6px">Nome</div>
<div class="inp" style="left:396px;width:557px"></div>
<div class="ddb"><div class="ddarrow"></div></div>
<div class="t" style="left:398px;top:102px;color:#3d3d55;letter-spacing:0.8px">Gabriel Mendes</div>
<svg width="12" height="10" viewBox="0 0 12 10" style="position:absolute;left:966px;top:104px"><path d="M1 5 L4.5 1 V3 H10.5 V7 H4.5 V9 Z" fill="#7fe060" stroke="#3cb814" stroke-width="1" stroke-linejoin="round"/></svg><svg width="12" height="10" viewBox="0 0 12 10" style="position:absolute;left:990px;top:104px"><path d="M11 5 L7.5 1 V3 H1.5 V7 H7.5 V9 Z" fill="#7fe060" stroke="#3cb814" stroke-width="1" stroke-linejoin="round"/></svg>
<svg width="17" height="16" viewBox="0 0 17 16" style="position:absolute;left:1012px;top:101px"><defs><linearGradient id="cc2" x1="0" y1="0" x2="1" y2="1"><stop offset="0" stop-color="#8fb0e6"/><stop offset="1" stop-color="#4a72bc"/></linearGradient></defs>
<path d="M1.5 1.5 Q0.5 1.5 0.5 2.8 V14 Q0.5 15.2 1.8 15.1 L14 14.2 Q15.3 14 15.3 12.8 V1.8 Q15.3 0.6 14 0.6 Z" fill="url(#cc2)" stroke="#3f62a8" stroke-width="0.8"/>
<rect x="2.3" y="3.8" width="11.5" height="9.2" fill="#f0f4fc"/>
<rect x="3" y="4.3" width="5" height="3.2" fill="#d9a58c"/>
<path d="M2.3 8.3 H13.8 M2.3 10.8 H13.8 M7.8 8 V13" stroke="#aac0e4" stroke-width="0.9"/>
<circle cx="12" cy="3.8" r="3.5" fill="#f2fcef" stroke="#4e7e4e" stroke-width="1"/>
<path d="M12.2 1.8 L11.6 4.4" stroke="#777" stroke-width="0.7" fill="none"/></svg>
<svg width="20" height="17" viewBox="0 0 20 17" style="position:absolute;left:1033px;top:100px"><defs><radialGradient id="ln2" cx="0.5" cy="0.4" r="0.6"><stop offset="0" stop-color="#ff7040"/><stop offset="1" stop-color="#c41a00"/></radialGradient>
<linearGradient id="bb2" x1="0" y1="0" x2="0" y2="1"><stop offset="0" stop-color="#3a3a3a"/><stop offset="0.5" stop-color="#202020"/><stop offset="1" stop-color="#111"/></linearGradient></defs>
<path d="M0.3 12.5 L3.4 2.8 Q4.6 0.5 6.3 0.6 Q8.6 0.7 9.3 1.8 L7.8 12 Z" fill="url(#bb2)"/>
<path d="M18.3 12.5 L15.2 2.8 Q14 0.5 12.3 0.6 Q10 0.7 9.3 1.8 L10.8 12 Z" fill="url(#bb2)"/>
<path d="M3.4 6 L4.6 2.2 Q5.5 1.2 6.4 1.5 L5.6 8 Z" fill="#8a8a8a" opacity="0.45"/>
<path d="M12.2 1.5 Q13.1 1.2 14 2.2 L15.2 6 L13 8 Z" fill="#8a8a8a" opacity="0.45"/>
<ellipse cx="3.7" cy="13.2" rx="3.4" ry="2.5" fill="url(#ln2)" stroke="#151515" stroke-width="1"/>
<ellipse cx="14.9" cy="13.2" rx="3.4" ry="2.5" fill="url(#ln2)" stroke="#151515" stroke-width="1"/></svg>
<svg width="19" height="18" viewBox="0 0 19 18" style="position:absolute;left:1057px;top:100px"><path d="M0.2 14.5 Q0.5 8.6 5.8 8.2 Q8.8 8.3 9 10 V14.5 Z" fill="#cbcfe6"/>
<circle cx="6.3" cy="4.2" r="3.2" fill="#f8d8b0"/>
<path d="M3 4.2 Q3 0.4 6.5 0.5 Q9.8 0.7 9.6 4 Q8.4 2.3 6 2.4 Q4.2 2.6 3 4.2 Z" fill="#b8862a"/>
<path d="M8.7 13.2 Q8.2 5 12.4 5 Q16.6 5 16.2 13.2 Z" fill="#b8862a"/>
<ellipse cx="12.4" cy="9.2" rx="2.3" ry="2.7" fill="#f6d0a8"/>
<path d="M6.9 16.8 Q7.2 13.3 12.4 13 Q17.5 13.3 17.9 16.8 Z" fill="#111"/>
<path d="M11.2 13 L12.4 16.8 L13.6 13 Z" fill="#f6d0a8"/></svg>
<div class="btn"><div class="btnin"></div></div>
<div class="t" style="left:1103px;top:102px;color:#3d3d55;letter-spacing:0.9px">Atualizar</div>
<div class="grid"></div>
<div class="gl" style="left:114px;top:191px;width:999px;height:1px"></div>
<div class="gl" style="left:114px;top:210px;width:999px;height:1px"></div>
<div class="gl" style="left:114px;top:229px;width:999px;height:1px"></div>
<div class="gl" style="left:114px;top:248px;width:999px;height:1px"></div>
<div class="gl" style="left:114px;top:267px;width:999px;height:1px"></div>
<div class="gl" style="left:114px;top:286px;width:999px;height:1px"></div>
<div class="gl" style="left:114px;top:305px;width:999px;height:1px"></div>
<div class="gl" style="left:17px;top:305px;width:1096px;height:1px"></div>
<div class="gl" style="left:163px;top:135px;width:1px;height:171px"></div>
<div class="gl" style="left:213px;top:135px;width:1px;height:171px"></div>
<div class="gl" style="left:263px;top:135px;width:1px;height:171px"></div>
<div class="gl" style="left:313px;top:135px;width:1px;height:171px"></div>
<div class="gl" style="left:363px;top:135px;width:1px;height:171px"></div>
<div class="gl" style="left:413px;top:135px;width:1px;height:171px"></div>
<div class="gl" style="left:463px;top:135px;width:1px;height:171px"></div>
<div class="gl" style="left:513px;top:135px;width:1px;height:171px"></div>
<div class="gl" style="left:563px;top:135px;width:1px;height:171px"></div>
<div class="gl" style="left:613px;top:135px;width:1px;height:171px"></div>
<div class="gl" style="left:663px;top:135px;width:1px;height:171px"></div>
<div class="gl" style="left:713px;top:135px;width:1px;height:171px"></div>
<div class="gl" style="left:763px;top:135px;width:1px;height:171px"></div>
<div class="gl" style="left:813px;top:135px;width:1px;height:171px"></div>
<div class="gl" style="left:863px;top:135px;width:1px;height:171px"></div>
<div class="gl" style="left:913px;top:135px;width:1px;height:171px"></div>
<div class="gl" style="left:963px;top:135px;width:1px;height:171px"></div>
<div class="gl" style="left:1013px;top:135px;width:1px;height:171px"></div>
<div class="gl" style="left:1063px;top:135px;width:1px;height:171px"></div>
<div class="gl" style="left:1113px;top:135px;width:1px;height:171px"></div>
<div class="hc" style="left:17px;top:135px;width:97px;height:19px"></div>
<div class="hc" style="left:114px;top:135px;width:50px;height:19px"></div>
<div class="hc" style="left:164px;top:135px;width:50px;height:19px"></div>
<div class="hc" style="left:214px;top:135px;width:50px;height:19px"></div>
<div class="hc" style="left:264px;top:135px;width:50px;height:19px"></div>
<div class="hc" style="left:314px;top:135px;width:50px;height:19px"></div>
<div class="hc" style="left:364px;top:135px;width:50px;height:19px"></div>
<div class="hc" style="left:414px;top:135px;width:50px;height:19px"></div>
<div class="hc" style="left:464px;top:135px;width:50px;height:19px"></div>
<div class="hc" style="left:514px;top:135px;width:50px;height:19px"></div>
<div class="hc" style="left:564px;top:135px;width:50px;height:19px"></div>
<div class="hc" style="left:614px;top:135px;width:50px;height:19px"></div>
<div class="hc" style="left:664px;top:135px;width:50px;height:19px"></div>
<div class="hc" style="left:714px;top:135px;width:50px;height:19px"></div>
<div class="hc" style="left:764px;top:135px;width:50px;height:19px"></div>
<div class="hc" style="left:814px;top:135px;width:50px;height:19px"></div>
<div class="hc" style="left:864px;top:135px;width:50px;height:19px"></div>
<div class="hc" style="left:914px;top:135px;width:50px;height:19px"></div>
<div class="hc" style="left:964px;top:135px;width:50px;height:19px"></div>
<div class="hc" style="left:1014px;top:135px;width:50px;height:19px"></div>
<div class="hc lc" style="left:1064px;top:135px;width:49px;height:19px"></div>
<div class="hc" style="left:17px;top:154px;width:97px;height:19px"></div>
<div class="hc" style="left:114px;top:154px;width:50px;height:19px"></div>
<div class="hc" style="left:164px;top:154px;width:50px;height:19px"></div>
<div class="hc" style="left:214px;top:154px;width:50px;height:19px"></div>
<div class="hc" style="left:264px;top:154px;width:50px;height:19px"></div>
<div class="hc" style="left:314px;top:154px;width:50px;height:19px"></div>
<div class="hc" style="left:364px;top:154px;width:50px;height:19px"></div>
<div class="hc" style="left:414px;top:154px;width:50px;height:19px"></div>
<div class="hc" style="left:464px;top:154px;width:50px;height:19px"></div>
<div class="hc" style="left:514px;top:154px;width:50px;height:19px"></div>
<div class="hc" style="left:564px;top:154px;width:50px;height:19px"></div>
<div class="hc" style="left:614px;top:154px;width:50px;height:19px"></div>
<div class="hc" style="left:664px;top:154px;width:50px;height:19px"></div>
<div class="hc" style="left:714px;top:154px;width:50px;height:19px"></div>
<div class="hc" style="left:764px;top:154px;width:50px;height:19px"></div>
<div class="hc" style="left:814px;top:154px;width:50px;height:19px"></div>
<div class="hc" style="left:864px;top:154px;width:50px;height:19px"></div>
<div class="hc" style="left:914px;top:154px;width:50px;height:19px"></div>
<div class="hc" style="left:964px;top:154px;width:50px;height:19px"></div>
<div class="hc" style="left:1014px;top:154px;width:50px;height:19px"></div>
<div class="hc lc" style="left:1064px;top:154px;width:49px;height:19px"></div>
<div class="hc" style="left:17px;top:173px;width:97px;height:19px"></div>
<div class="hc" style="left:17px;top:192px;width:97px;height:19px"></div>
<div class="hc" style="left:17px;top:211px;width:97px;height:19px"></div>
<div class="hc" style="left:17px;top:230px;width:97px;height:19px"></div>
<div class="hc" style="left:17px;top:249px;width:97px;height:19px"></div>
<div class="hc" style="left:17px;top:268px;width:97px;height:19px"></div>
<div class="hc lr" style="left:17px;top:287px;width:97px;height:18px"></div>
<div class="ct hdr" style="left:20px;top:139px;width:93px"><span>Data</span></div>
<div class="ct hdr" style="left:117px;top:139px;width:46px"><span>Ent. 1</span></div>
<div class="ct hdr" style="left:167px;top:139px;width:46px"><span>Saí. 1</span></div>
<div class="ct hdr" style="left:217px;top:139px;width:46px"><span>Ent. 2</span></div>
<div class="ct hdr" style="left:267px;top:139px;width:46px"><span>Saí. 2</span></div>
<div class="ct hdr" style="left:317px;top:139px;width:46px"><span>Ent. 3</span></div>
<div class="ct hdr" style="left:367px;top:139px;width:46px"><span>Saí. 3</span></div>
<div class="ct hdr" style="left:417px;top:139px;width:46px"><span>Normais</span></div>
<div class="ct hdr" style="left:467px;top:139px;width:46px"><span>Faltas</span></div>
<div class="ct hdr" style="left:517px;top:139px;width:46px"><span>Extras</span></div>
<div class="ct hdr" style="left:567px;top:139px;width:46px"><span>DSR</span></div>
<div class="ct hdr" style="left:617px;top:139px;width:46px"><span>DSR.De</span></div>
<div class="ct hdr" style="left:667px;top:139px;width:46px"><span>Not.</span></div>
<div class="ct hdr" style="left:717px;top:139px;width:46px"><span>ExNot</span></div>
<div class="ct hdr" style="left:767px;top:139px;width:46px"><span>Not.Tot.</span></div>
<div class="ct hdr" style="left:817px;top:139px;width:46px"><span>Ajuste</span></div>
<div class="ct hdr" style="left:867px;top:139px;width:46px"><span>Adian.</span></div>
<div class="ct hdr" style="left:917px;top:139px;width:46px"><span>Atras.</span></div>
<div class="ct hdr" style="left:967px;top:139px;width:46px"><span>Carga</span></div>
<div class="ct hdr" style="left:1017px;top:139px;width:46px"><span>JustPa.</span></div>
<div class="ct hdr" style="left:1067px;top:139px;width:46px"><span>Intraj.</span></div>
<div class="ct hdr tot" style="left:418px;top:158px;width:46px"><span>31:43</span></div>
<div class="ct hdr tot" style="left:468px;top:158px;width:46px"><span>08:17</span></div>
<div class="ct hdr tot" style="left:518px;top:158px;width:46px"><span>00:15</span></div>
<div class="ct hdr tot" style="left:568px;top:158px;width:46px"><span>00:00</span></div>
<div class="ct hdr tot" style="left:618px;top:158px;width:46px"><span>00:00</span></div>
<div class="ct hdr tot" style="left:668px;top:158px;width:46px"><span>27:08</span></div>
<div class="ct hdr tot" style="left:718px;top:158px;width:46px"><span>00:00</span></div>
<div class="ct hdr tot" style="left:768px;top:158px;width:46px"><span>27:08</span></div>
<div class="ct hdr tot" style="left:818px;top:158px;width:46px"><span>00:00</span></div>
<div class="ct hdr tot" style="left:868px;top:158px;width:46px"><span>00:23</span></div>
<div class="ct hdr tot" style="left:918px;top:158px;width:46px"><span>00:32</span></div>
<div class="ct hdr tot" style="left:968px;top:158px;width:46px"><span>40:00</span></div>
<div class="ct hdr tot" style="left:1018px;top:158px;width:46px"><span>00:00</span></div>
<div class="ct hdr tot" style="left:1068px;top:158px;width:46px"><span>04:08</span></div>
<div class="ct dt" style="left:20px;top:177px;width:93px;color:#000;"><span>29/03/21 - seg</span></div>
<div class="ct val" style="left:118px;top:177px;width:45px"><span>22:02</span></div>
<div class="ct val" style="left:168px;top:177px;width:45px"><span>01:02</span></div>
<div class="ct val" style="left:218px;top:177px;width:45px"><span>02:06</span></div>
<div class="ct val" style="left:268px;top:177px;width:45px"><span>07:08</span></div>
<div class="ct val" style="left:418px;top:177px;width:45px"><span>07:54</span></div>
<div class="ct val" style="left:468px;top:177px;width:45px"><span>00:06</span></div>
<div class="ct val" style="left:518px;top:177px;width:45px"><span>00:08</span></div>
<div class="ct val" style="left:668px;top:177px;width:45px"><span>06:45</span></div>
<div class="ct val" style="left:768px;top:177px;width:45px"><span>06:45</span></div>
<div class="ct val" style="left:868px;top:177px;width:45px"><span>00:10</span></div>
<div class="ct val" style="left:918px;top:177px;width:45px"><span>00:08</span></div>
<div class="ct val" style="left:968px;top:177px;width:45px"><span>08:00</span></div>
<div class="ct val" style="left:1068px;top:177px;width:45px"><span>01:04</span></div>
<div class="ct dt" style="left:20px;top:196px;width:93px;color:#000;"><span>30/03/21 - ter</span></div>
<div class="ct val" style="left:118px;top:196px;width:45px"><span>22:01</span></div>
<div class="ct val" style="left:168px;top:196px;width:45px"><span>01:02</span></div>
<div class="ct val" style="left:218px;top:196px;width:45px"><span>02:04</span></div>
<div class="ct val" style="left:268px;top:196px;width:45px"><span>07:07</span></div>
<div class="ct val" style="left:418px;top:196px;width:45px"><span>08:00</span></div>
<div class="ct val" style="left:518px;top:196px;width:45px"><span>00:07</span></div>
<div class="ct val" style="left:668px;top:196px;width:45px"><span>06:51</span></div>
<div class="ct val" style="left:768px;top:196px;width:45px"><span>06:51</span></div>
<div class="ct val" style="left:868px;top:196px;width:45px"><span>00:09</span></div>
<div class="ct val" style="left:918px;top:196px;width:45px"><span>00:05</span></div>
<div class="ct val" style="left:968px;top:196px;width:45px"><span>08:00</span></div>
<div class="ct val" style="left:1068px;top:196px;width:45px"><span>01:02</span></div>
<div class="ct dt" style="left:20px;top:215px;width:93px;color:#000;"><span>31/03/21 - qua</span></div>
<div class="ct val" style="left:118px;top:215px;width:45px"><span>22:09</span></div>
<div class="ct val" style="left:168px;top:215px;width:45px"><span>01:02</span></div>
<div class="ct val" style="left:218px;top:215px;width:45px"><span>02:02</span></div>
<div class="ct val" style="left:268px;top:215px;width:45px"><span>07:01</span></div>
<div class="ct val" style="left:418px;top:215px;width:45px"><span>07:49</span></div>
<div class="ct val" style="left:468px;top:215px;width:45px"><span>00:11</span></div>
<div class="ct val" style="left:668px;top:215px;width:45px"><span>06:41</span></div>
<div class="ct val" style="left:768px;top:215px;width:45px"><span>06:41</span></div>
<div class="ct val" style="left:868px;top:215px;width:45px"><span>00:03</span></div>
<div class="ct val" style="left:918px;top:215px;width:45px"><span>00:11</span></div>
<div class="ct val" style="left:968px;top:215px;width:45px"><span>08:00</span></div>
<div class="ct val" style="left:1068px;top:215px;width:45px"><span>01:00</span></div>
<div class="ct dt" style="left:20px;top:234px;width:93px;color:#000;"><span>01/04/21 - qui</span></div>
<div class="ct val" style="left:118px;top:234px;width:45px"><span>22:05</span></div>
<div class="ct val" style="left:168px;top:234px;width:45px"><span>01:01</span></div>
<div class="ct val" style="left:218px;top:234px;width:45px"><span>02:03</span></div>
<div class="ct val" style="left:268px;top:234px;width:45px"><span>07:00</span></div>
<div class="ct val" style="left:418px;top:234px;width:45px"><span>08:00</span></div>
<div class="ct val" style="left:668px;top:234px;width:45px"><span>06:51</span></div>
<div class="ct val" style="left:768px;top:234px;width:45px"><span>06:51</span></div>
<div class="ct val" style="left:868px;top:234px;width:45px"><span>00:01</span></div>
<div class="ct val" style="left:918px;top:234px;width:45px"><span>00:08</span></div>
<div class="ct val" style="left:968px;top:234px;width:45px"><span>08:00</span></div>
<div class="ct val" style="left:1068px;top:234px;width:45px"><span>01:02</span></div>
<div class="ct dt" style="left:20px;top:253px;width:93px;color:#000;"><span>02/04/21 - sex</span></div>
<div class="ct val" style="left:468px;top:253px;width:45px"><span>08:00</span></div>
<div class="ct val" style="left:968px;top:253px;width:45px"><span>08:00</span></div>
<div class="ct dt" style="left:20px;top:272px;width:93px;color:#000;"><span>03/04/21 - sáb</span></div>
<div class="ct dt" style="left:20px;top:291px;width:93px;color:#ff0000;letter-spacing:1.3px"><span>04/04/21 - dom</span></div>
</div>
<div class="cap" style="left:345px;top:890px">Funcionário com o Fechamento configurado corretamente em seu horário</div>
</body></html>
